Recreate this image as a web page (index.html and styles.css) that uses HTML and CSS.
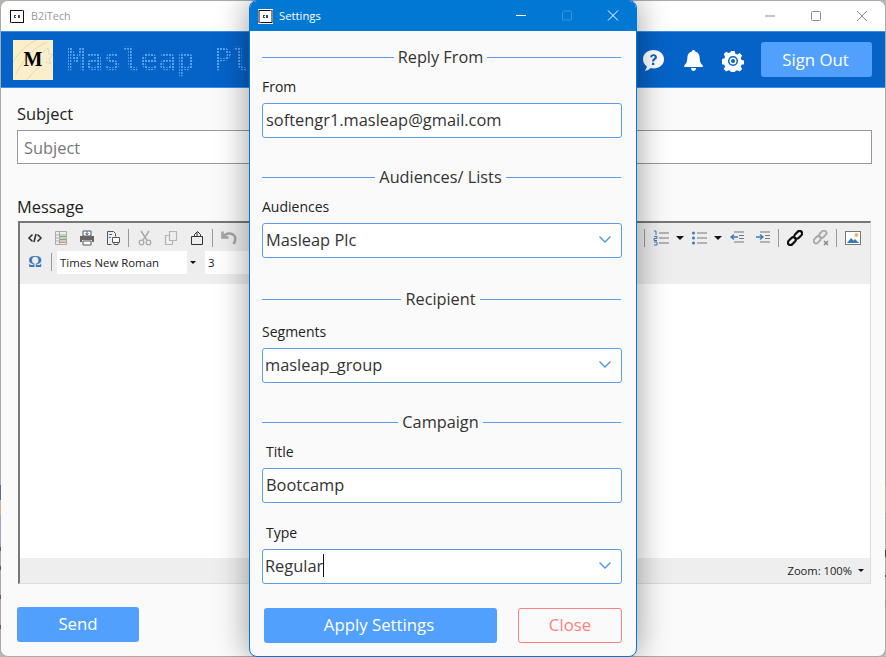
FILE: index.html
```html
<!DOCTYPE html>
<html>

<head>
  <meta name="viewport" content="width=device-width, initial-scale=1.0">
  <title>B2iTech</title>
  <link rel="stylesheet" href="styles.css">
</head>

<body>
  <div class="window">
    <div class="titlebar">
      <svg class="app-icon" width="14" height="13" viewBox="0 0 14 13">
        <rect x="0.5" y="0.5" width="13" height="12" fill="#fff" stroke="#111" />
        <path d="M4 5h2v1H5v1h1v1H4zM8 5h2v3H8z" fill="#444" />
        <path d="M0 12h2v1H0zM12 0h2v1h-2z" fill="#d22" />
      </svg>
      <span class="titlebar-name">B2iTech</span>
      <div class="win-controls">
        <svg width="12" height="12" viewBox="0 0 12 12"><path d="M1 6h10" stroke="#8a8a8a" fill="none" /></svg>
        <svg width="12" height="12" viewBox="0 0 12 12"><rect x="1.5" y="1.5" width="9" height="9" rx="1" stroke="#8a8a8a" fill="none" /></svg>
        <svg width="12" height="12" viewBox="0 0 12 12"><path d="M1 1l10 10M11 1L1 11" stroke="#8a8a8a" fill="none" /></svg>
      </div>
    </div>

    <header class="topbar">
      <div class="logo">
        <svg class="logo-lines" width="40" height="40" viewBox="0 0 40 40">
          <path d="M0 22C6 12 14 4 24 0M3 34C10 20 20 8 34 2M14 40C18 34 22 30 28 26M30 12l5-4 1 6 4 1-4 4 2 5-5-2" fill="none" stroke="#e4d6b4" />
        </svg>
        <span class="logo-letter">M</span>
      </div>
      <div class="brand">Masleap Plc</div>
      <div class="topbar-actions">
        <svg width="23" height="23" viewBox="0 0 23 23">
          <path d="M11.5 1C17.6 1 22 5 22 10.2S17.6 19.4 11.5 19.4c-1 0-1.900-.1-2.800-.3C7.300 20.600 5.200 21.800 2.700 22c1.200-1.200 2-2.900 2.100-4.700C2.400 15.700 1 13.100 1 10.200 1 5 5.400 1 11.500 1z" fill="#fff" />
          <path d="M8.200 8.300c0-1.900 1.500-3 3.400-3s3.300 1.100 3.300 2.900c0 2.500-2.700 2.400-2.700 4.200h-2.100c-.1-2.800 2.600-2.800 2.600-4.100 0-.7-.5-1.200-1.200-1.200-.8 0-1.300.5-1.300 1.200zM10 13.700h2.300V16H10z" fill="#0563c8" />
        </svg>
        <svg width="19" height="21" viewBox="0 0 19 21">
          <path d="M9.500 0c1 0 1.600.7 1.600 1.600 3 .7 4.600 3.200 4.600 6.400 0 3.800 1.100 5.600 3 7.200V17H.3v-1.800c1.900-1.600 3-3.400 3-7.200 0-3.200 1.600-5.700 4.600-6.400C7.900.7 8.500 0 9.500 0zM7 18h5c0 1.600-1 3-2.500 3S7 19.600 7 18z" fill="#fff" />
        </svg>
        <svg width="22" height="22" viewBox="0 0 22 22">
          <path d="M9 0h4l.7 3 2.200.9 2.600-1.600 2.800 2.800-1.600 2.600.9 2.300 3 .6v4l-3 .7-.9 2.200 1.600 2.600-2.800 2.800-2.600-1.600-2.200.9-.7 3H9l-.7-3-2.200-.9-2.600 1.600-2.800-2.800 1.600-2.600-.9-2.200-3-.7V9l3-.6.9-2.300-1.600-2.600 2.800-2.800 2.600 1.600 2.200-.9z" transform="translate(1 1) scale(.9)" fill="#fff" />
          <circle cx="11" cy="11" r="4.300" fill="none" stroke="#0563c8" stroke-width="1.500" />
          <circle cx="11" cy="11" r="2" fill="#0563c8" />
        </svg>
        <button class="btn btn-signout" type="button">Sign Out</button>
      </div>
    </header>

    <main class="content">
      <label class="main-label">Subject</label>
      <input class="subject-input" type="text" placeholder="Subject">
      <label class="main-label message-label">Message</label>

      <div class="editor">
        <div class="toolbar">
          <div class="toolbar-row">
            <div class="tool-group">
              <svg class="tool" viewBox="0 0 16 16"><path d="M5.500 4.500L2 8l3.500 3.500M10.500 4.500L14 8l-3.500 3.500M9 4l-2 8" fill="none" stroke="#333" stroke-width="1.600" /></svg>
              <svg class="tool" viewBox="0 0 16 16"><path d="M2.500 1.500h11v13h-11zM2.500 5h11M2.500 8h11M2.500 11h11M6.500 1.500v13" fill="none" stroke="#aaa" /><path d="M7 6h6v1H7zM7 9h6v1H7z" fill="#7ab06a" /><path d="M7 12h6v1H7z" fill="#d9955a" /></svg>
              <svg class="tool" viewBox="0 0 16 16"><path d="M4 1h8v5H4z" fill="#fff" stroke="#555" /><path d="M8 1v3M6.500 3L8 5l1.500-2" stroke="#2f73b5" fill="none" /><path d="M1 6h14v6h-2v-2H3v2H1z" fill="#666" /><path d="M4 11h8v4H4z" fill="#fff" stroke="#555" /></svg>
              <svg class="tool" viewBox="0 0 16 16"><path d="M2.500 1.500h6l2 2v3M2.500 1.500v13h4" fill="none" stroke="#555" /><path d="M7.500 7.500h7v5h-7zM9 12.500h4v2H9z" fill="#fff" stroke="#555" /><path d="M4 4h3v1H4zM4 7h2v1H4z" fill="#2f73b5" /></svg>
              <span class="tool-sep"></span>
              <svg class="tool" viewBox="0 0 16 16"><path d="M4 1l6 9M12 1L6 10" stroke="#aaa" stroke-width="1.500" fill="none" /><circle cx="4.500" cy="12.500" r="2.300" fill="none" stroke="#aaa" stroke-width="1.300" /><circle cx="11.500" cy="12.500" r="2.300" fill="none" stroke="#aaa" stroke-width="1.300" /></svg>
              <svg class="tool" viewBox="0 0 16 16"><path d="M6.500 1.500h7v9h-7zM6.500 5.500h-4v9h7v-4" fill="none" stroke="#b5b5b5" stroke-width="1.200" /></svg>
              <svg class="tool" viewBox="0 0 16 16"><path d="M2.500 6.500h11v8h-11zM5.500 6.500v-2l3-3 3 3v2M8 2v4" fill="none" stroke="#333" /></svg>
              <span class="tool-sep"></span>
              <svg class="tool" viewBox="0 0 16 16"><path d="M1.500 1.500v6h6M2.500 6.500C4.500 3.500 9 2.500 12 4.500s3 6 .5 9.500" fill="none" stroke="#a5a5a5" stroke-width="2.600" /></svg>
            </div>
            <div class="tool-group">
              <span class="tool-sep"></span>
              <svg class="tool" viewBox="0 0 16 16"><path d="M6 3h10M6 8h10M6 13h10" stroke="#777" /><path d="M1 1h2v4M1 6.500h3v2H1v2h3M1 12h3v3H1" fill="none" stroke="#3b78b8" /></svg>
              <span class="caret"></span>
              <svg class="tool" viewBox="0 0 16 16"><path d="M6 3h10M6 8h10M6 13h10" stroke="#777" /><circle cx="2.500" cy="3" r="1.500" fill="#3b78b8" /><circle cx="2.500" cy="8" r="1.500" fill="#3b78b8" /><circle cx="2.500" cy="13" r="1.500" fill="#3b78b8" /></svg>
              <span class="caret"></span>
              <svg class="tool" viewBox="0 0 16 16"><path d="M5 2h10M10 5.500h5M10 8.500h5M5 12h10" stroke="#777" /><path d="M9 7H2M5 4.500L2 7l3 2.500" stroke="#3b78b8" fill="none" stroke-width="1.300" /></svg>
              <svg class="tool" viewBox="0 0 16 16"><path d="M5 2h10M10 5.500h5M10 8.500h5M5 12h10" stroke="#777" /><path d="M1 7h7M5 4.500L8 7 5 9.500" stroke="#3b78b8" fill="none" stroke-width="1.300" /></svg>
              <span class="tool-sep"></span>
              <svg class="tool" viewBox="0 0 16 16"><g fill="none" stroke="#111" stroke-width="2.200" transform="rotate(-45 8 8)"><rect x="-1" y="5.500" width="9" height="5" rx="2.500" /><rect x="8" y="5.500" width="9" height="5" rx="2.500" /></g></svg>
              <svg class="tool" viewBox="0 0 16 16"><g fill="none" stroke="#aaa" stroke-width="2" transform="rotate(-45 7 7)"><rect x="-1" y="4.500" width="8" height="5" rx="2.500" /><rect x="7" y="4.500" width="8" height="5" rx="2.500" /></g><path d="M11 11l4 4M15 11l-4 4" stroke="#888" stroke-width="1.600" /></svg>
              <span class="tool-sep"></span>
              <svg class="tool" viewBox="0 0 16 16"><rect x="0.500" y="1.500" width="15" height="13" fill="#fff" stroke="#777" /><path d="M2 13l4-5 2.500 2.500L10 9l4 4z" fill="#3b78b8" /><circle cx="11.500" cy="5" r="2" fill="#eeb765" /></svg>
            </div>
          </div>
          <div class="toolbar-row toolbar-row-second">
            <span class="omega">Ω</span>
            <span class="tool-sep"></span>
            <div class="font-select">Times New Roman<span class="font-arrow"><span class="caret caret-small"></span></span></div>
            <div class="size-select">3</div>
          </div>
        </div>
        <div class="editor-body"></div>
        <div class="statusbar">Zoom: 100%<span class="caret caret-small caret-zoom"></span></div>
      </div>

      <button class="btn btn-send" type="button">Send</button>
    </main>
  </div>
  <div class="desk-edge desk-edge-left"></div>
  <div class="desk-edge desk-edge-right"></div>

  <div class="dialog">
    <div class="dialog-title">
      <svg class="app-icon" width="15" height="15" viewBox="0 0 15 15">
        <rect width="15" height="15" fill="#fff" />
        <rect x="1" y="1.500" width="13" height="12" fill="#fff" stroke="#111" />
        <path d="M5 6h2v1H6v1h1v1H5zM8 6h2v3H8z" fill="#444" />
        <path d="M1 13h2v1H1zM12 1h2v1h-2z" fill="#d22" />
      </svg>
      <span class="dialog-name">Settings</span>
      <div class="dialog-controls">
        <svg width="12" height="12" viewBox="0 0 12 12"><path d="M1 5.500h10" stroke="#fff" fill="none" /></svg>
        <svg width="12" height="12" viewBox="0 0 12 12"><rect x="1.500" y="1" width="9" height="9" rx="1" stroke="#3d95dd" fill="none" /></svg>
        <svg width="12" height="12" viewBox="0 0 12 12"><path d="M1 .5l10 10M11 .5l-10 10" stroke="#fff" fill="none" /></svg>
      </div>
    </div>

    <div class="dialog-body">
      <section class="group group-first">
        <div class="legend">Reply From</div>
        <label class="field-label">From</label>
        <input class="field" type="text" value="softengr1.masleap@gmail.com">
      </section>

      <section class="group">
        <div class="legend">Audiences/ Lists</div>
        <label class="field-label">Audiences</label>
        <div class="field combo">
          <span>Masleap Plc</span>
          <svg class="chevron" width="12" height="7" viewBox="0 0 12 7"><path d="M.5.5L6 6l5.500-5.500" fill="none" stroke="#4a94ea" stroke-width="1.300" /></svg>
        </div>
      </section>

      <section class="group group-wide">
        <div class="legend">Recipient</div>
        <label class="field-label field-label-low">Segments</label>
        <div class="field combo combo-tight">
          <span>masleap_group</span>
          <svg class="chevron" width="12" height="7" viewBox="0 0 12 7"><path d="M.5.5L6 6l5.500-5.500" fill="none" stroke="#4a94ea" stroke-width="1.300" /></svg>
        </div>
      </section>

      <section class="group">
        <div class="legend">Campaign</div>
        <label class="field-label field-label-indent">Title</label>
        <input class="field" type="text" value="Bootcamp">
        <label class="field-label field-label-indent field-label-next">Type</label>
        <div class="field combo combo-tight">
          <span>Regular</span><span class="text-cursor"></span>
          <svg class="chevron" width="12" height="7" viewBox="0 0 12 7"><path d="M.5.5L6 6l5.500-5.500" fill="none" stroke="#4a94ea" stroke-width="1.300" /></svg>
        </div>
      </section>

      <div class="dialog-buttons">
        <button class="btn btn-apply" type="button">Apply Settings</button>
        <button class="btn btn-close" type="button">Close</button>
      </div>
    </div>
  </div>
</body>

</html>
```

FILE: styles.css
```css
html,
body {
  height: 100%;
  margin: 0;
  padding: 0;
  overflow: hidden;
  background-color: #b9b6ae;
  font-family: "Open Sans", "Noto Sans", sans-serif;
  color: #222;
}

.window {
  height: 657px;
  box-sizing: border-box;
  display: flex;
  flex-direction: column;
  background-color: #fafafa;
  border: 1px solid #aaa;
  border-radius: 8px;
  overflow: hidden;
}

/* wallpaper showing through along the window's edge */
.desk-edge {
  position: absolute;
  top: 485px;
  width: 1px;
  height: 156px;
}

.desk-edge-left {
  left: 0;
  background: linear-gradient(#5a6b9a 0 15px, #cdb68a 15px 30px, #9fa6b8 30px 62px, #7d4a6e 62px 66px, #aaa 66px 81px, #7d4a6e 81px 85px, #aaa 85px 110px, #7d4a6e 110px 114px, #aaa 114px 140px, #7d4a6e 140px 144px, #aaa 144px);
}

.desk-edge-right {
  right: 0;
  background: linear-gradient(#c7b48c 0 28px, #a9a9a9 28px 65px, #444 65px 72px, #a9a9a9 72px 90px, #444 90px 92px, #a9a9a9 92px 115px, #8aa0a0 115px 122px, #a9a9a9 122px);
}

.titlebar {
  height: 30px;
  flex: none;
  display: flex;
  align-items: center;
  padding-left: 9px;
  background-color: #fff;
}

.titlebar-name {
  margin-left: 7px;
  padding-bottom: 2px;
  font-size: 10.8px;
  color: #999;
}

.win-controls {
  margin-left: auto;
  display: flex;
  gap: 34px;
  padding-right: 17px;
}

.topbar {
  height: 57px;
  flex: none;
  box-sizing: border-box;
  display: flex;
  align-items: center;
  padding: 0 13px 0 12px;
  background-color: #0563c8;
  border-top: 1px solid #3b8fe8;
  border-bottom: 1px solid #3b8fe8;
}

.logo {
  position: relative;
  width: 40px;
  height: 40px;
  display: flex;
  align-items: center;
  justify-content: center;
  background-color: #fbeecb;
}

.logo-lines {
  position: absolute;
  top: 0;
  left: 0;
}

.logo-letter {
  position: relative;
  font-family: "Liberation Serif", serif;
  font-weight: bold;
  font-size: 20px;
  color: #000;
}

.brand {
  margin-left: 14px;
  font-family: "DejaVu Sans Mono", monospace;
  font-size: 30px;
  letter-spacing: 0.25px;
  white-space: nowrap;
  color: transparent;
  -webkit-text-stroke: 0.6px transparent;
  background-image: conic-gradient(from 270deg at 2px 2px, #58a6f2 25%, transparent 0);
  background-size: 3px 3px;
  -webkit-background-clip: text;
  background-clip: text;
}

.topbar-actions {
  margin-left: auto;
  display: flex;
  align-items: center;
  gap: 19px;
}

.topbar-actions svg {
  margin-top: 2px;
}

.btn {
  border: none;
  border-radius: 3px;
  padding: 0 0 2px;
  font-family: inherit;
  font-size: 16.8px;
  color: #fff;
  background-color: #52a0fe;
  cursor: pointer;
}

.btn-signout {
  width: 111px;
  height: 35px;
  margin-left: -2px;
  padding: 0 2px 0 0;
}

.content {
  flex: 1;
  display: flex;
  flex-direction: column;
  padding: 15px 13px 0 16px;
}

.main-label {
  font-size: 16.4px;
  line-height: 22px;
  color: #222;
}

.subject-input {
  height: 34px;
  box-sizing: border-box;
  margin-top: 5px;
  padding: 0 6px;
  border: 1px solid #999;
  font-family: inherit;
  font-size: 16.4px;
  background-color: #fff;
}

.subject-input::placeholder {
  color: #777;
}

.message-label {
  margin-top: 32px;
}

.editor {
  height: 363px;
  box-sizing: border-box;
  margin: 3px 1px 0;
  display: flex;
  flex-direction: column;
  border: 1px solid #ddd;
  border-top: 2px solid #777;
  border-left: 2px solid #777;
  background-color: #fff;
}

.toolbar {
  height: 61px;
  flex: none;
  box-sizing: border-box;
  padding-top: 2px;
  background-color: #eee;
}

.toolbar-row {
  height: 26px;
  display: flex;
  align-items: center;
  justify-content: space-between;
  padding: 0 9px 0 7px;
}

.toolbar-row-second {
  justify-content: flex-start;
  margin-top: -2px;
  padding-left: 6px;
}

.tool-group {
  display: flex;
  align-items: center;
  gap: 10px;
}

.tool {
  width: 16px;
  height: 16px;
}

.tool-sep {
  width: 1px;
  height: 18px;
  margin: 0 -2px 0 -3px;
  background-color: #999;
}

.caret {
  width: 0;
  height: 0;
  margin: 0 -3px;
  border-left: 4px solid transparent;
  border-right: 4px solid transparent;
  border-top: 4px solid #111;
}

.caret-small {
  margin: 0;
  border-left-width: 3px;
  border-right-width: 3px;
  border-top-width: 3px;
}

.caret-zoom {
  margin-left: 6px;
}

.omega {
  width: 18px;
  margin-right: 7px;
  font-family: "Liberation Serif", serif;
  font-weight: bold;
  font-size: 17px;
  color: #3b78b8;
  text-align: center;
}

.toolbar-row-second .tool-sep {
  margin: 0;
}

.font-select {
  width: 141px;
  height: 23px;
  box-sizing: border-box;
  margin-left: 5px;
  display: flex;
  align-items: center;
  justify-content: space-between;
  padding-left: 3px;
  font-size: 11.4px;
  background-color: #fff;
}

.font-arrow {
  width: 11px;
  height: 23px;
  display: flex;
  align-items: center;
  justify-content: center;
  background-color: #eee;
}

.size-select {
  width: 60px;
  height: 23px;
  margin-left: 7px;
  padding-left: 3px;
  font-size: 11.4px;
  line-height: 23px;
  background-color: #fff;
}

.editor-body {
  flex: 1;
}

.statusbar {
  height: 25px;
  flex: none;
  display: flex;
  align-items: center;
  justify-content: flex-end;
  padding-right: 6px;
  font-size: 11.2px;
  background-color: #eee;
}

.btn-send {
  align-self: flex-start;
  width: 122px;
  height: 35px;
  margin-top: 23px;
}

/* settings dialog sits over the main window */
.dialog {
  position: absolute;
  top: 0;
  left: 249px;
  width: 388px;
  height: 657px;
  box-sizing: border-box;
  display: flex;
  flex-direction: column;
  background-color: #fafafa;
  border: 1px solid #0078d4;
  border-radius: 8px;
  box-shadow: 0 0 32px rgba(0, 0, 0, 0.4);
  overflow: hidden;
}

.dialog-title {
  height: 30px;
  flex: none;
  display: flex;
  align-items: center;
  padding-left: 8px;
  background-color: #0078d4;
}

.dialog-name {
  margin-left: 6px;
  padding-bottom: 2px;
  font-size: 11.3px;
  color: #fff;
}

.dialog-controls {
  margin-left: auto;
  display: flex;
  gap: 34px;
  padding-right: 17px;
}

.dialog-body {
  flex: 1;
  padding: 0 14px 0 12px;
}

.group {
  margin-top: 27px;
}

.group-first {
  margin-top: 14px;
}

.group-wide {
  margin-top: 29px;
}

.legend {
  height: 24px;
  box-sizing: border-box;
  margin-right: 1px;
  padding-bottom: 1px;
  display: flex;
  align-items: center;
  gap: 4px;
  font-size: 16.3px;
  color: #333;
}

.legend::before,
.legend::after {
  content: "";
  flex: 1 1 0;
  height: 1px;
  margin-top: 1px;
  background-color: #5a9bf0;
}

.legend::after {
  flex-basis: 2px;
}

.field-label {
  display: block;
  margin-top: 7px;
  margin-bottom: 5px;
  font-size: 14px;
  line-height: 22px;
  color: #222;
}

.field-label-low {
  margin-top: 10px;
}

.field-label-indent {
  padding-left: 4px;
}

.field-label-next {
  margin-top: 19px;
}

.field {
  width: 360px;
  height: 35px;
  box-sizing: border-box;
  padding: 0 3px 2px;
  border: 1px solid #5a9bf0;
  border-radius: 3px;
  font-family: inherit;
  font-size: 16.4px;
  color: #333;
  background-color: #fff;
}

.combo {
  display: flex;
  align-items: center;
}

.combo-tight {
  padding-left: 2px;
}

.chevron {
  margin-left: auto;
  margin-right: 7px;
}

.text-cursor {
  width: 1px;
  height: 23px;
  background-color: #111;
}

.dialog-buttons {
  display: flex;
  justify-content: space-between;
  margin-top: 24px;
  padding-left: 2px;
}

.btn-apply {
  width: 233px;
  height: 35px;
  padding-right: 3px;
}

.btn-close {
  width: 104px;
  height: 35px;
  border: 1px solid #ff8080;
  color: #ff8080;
  background-color: transparent;
}
```
